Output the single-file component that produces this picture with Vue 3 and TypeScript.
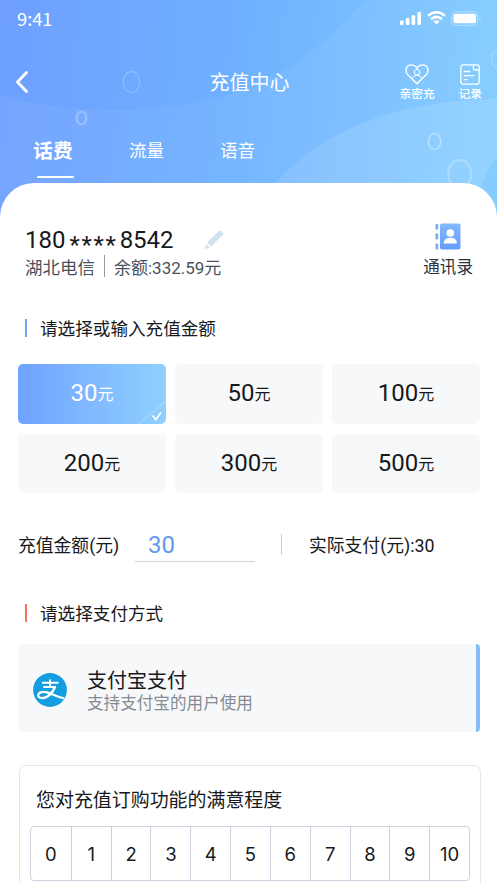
<script setup lang="ts">
import { ref } from 'vue'

const tabs: string[] = ['话费', '流量', '语音']
const activeTab = ref<number>(0)

const amounts: number[] = [30, 50, 100, 200, 300, 500]
const selected = ref<number>(30)

const scores: number[] = Array.from({ length: 11 }, (_, i) => i)
</script>

<template>
  <div class="page">
    <header class="hero">
      <svg class="decor" viewBox="0 0 497 225" width="497" height="225" aria-hidden="true">
        <path d="M0 94 Q50 110 115 110 Q250 110 325 40 Q352 13 366 0 L497 0 L497 225 L0 225Z" fill="#fff" fill-opacity=".055" />
        <path d="M275 183 C325 128 400 100 497 99 V225 H275Z" fill="#fff" fill-opacity=".11" />
        <path d="M497 157 Q486 171 480 190 L497 220Z" fill="#62bfff" fill-opacity=".3" />
        <g fill="none" stroke="#fff">
          <ellipse cx="131.5" cy="82" rx="8.2" ry="10.5" stroke-opacity=".22" stroke-width="1.3" />
          <ellipse cx="81.5" cy="118" rx="4.8" ry="6.3" stroke-opacity=".24" stroke-width="2.6" />
          <ellipse cx="434.5" cy="141.5" rx="6.2" ry="8" stroke-opacity=".4" stroke-width="1.5" />
          <ellipse cx="459.7" cy="174" rx="11.5" ry="14" stroke-opacity=".24" stroke-width="2.4" />
          <ellipse cx="498" cy="59" rx="6.5" ry="9" stroke-opacity=".23" stroke-width="1.3" />
        </g>
      </svg>

      <div class="status">
        <span class="time">9:41</span>
        <div class="status-icons">
          <svg width="22" height="14" viewBox="0 0 22 14" fill="#fff">
            <rect x="0" y="8.5" width="3.6" height="4.5" rx="1" />
            <rect x="5.8" y="6" width="3.6" height="7" rx="1" />
            <rect x="11.6" y="3.2" width="3.6" height="9.8" rx="1" />
            <rect x="17.4" y="0" width="3.6" height="13" rx="1" />
          </svg>
          <svg width="19" height="14" viewBox="0 0 19 14" fill="none" stroke="#fff" stroke-width="2.5">
            <path d="M1 4.7 Q9.5-2.3 18 4.7" />
            <path d="M4 8.2 Q9.5 3.6 15 8.2" />
            <path d="M6.4 10.4 Q9.5 8 12.6 10.4 L9.5 13.4Z" fill="#fff" stroke="none" />
          </svg>
          <svg width="31" height="15" viewBox="0 0 31 15">
            <rect x=".7" y=".7" width="26" height="13.6" rx="3.8" fill="none" stroke="#fff" stroke-opacity=".4" />
            <rect x="2.5" y="2.7" width="22.5" height="9.6" rx="1.8" fill="#fff" />
            <path d="M28.5 5.5 Q31 7.5 28.5 9.5Z" fill="#fff" fill-opacity=".45" />
          </svg>
        </div>
      </div>

      <nav class="navbar">
        <svg class="back" width="14" height="24" viewBox="0 0 14 24" fill="none" stroke="#fff" stroke-width="2.8" stroke-linecap="round" stroke-linejoin="round">
          <path d="M11.5 2.5 L2.5 12 L11.5 21.5" />
        </svg>
        <h1>充值中心</h1>
        <div class="actions">
          <div class="action">
            <svg width="24" height="21" viewBox="0 0 24 21" fill="none" stroke="#fff" stroke-width="1.4" stroke-linecap="round" stroke-linejoin="round">
              <path d="M12 19.8 L2.9 10.8 C-.8 6.8 1.4 .9 6.2 .9 C9 .9 11 2.4 12 4.2 C13 2.4 15 .9 17.8 .9 C22.6 .9 24.8 6.8 21.1 10.8Z" />
              <circle cx="12" cy="8.2" r="2.8" stroke-width="1" />
              <path d="M7.6 14.2 Q8.2 11.2 12 11.2 Q15.8 11.2 16.4 14.2" stroke-width="1" />
            </svg>
            <span>亲密充</span>
          </div>
          <div class="action">
            <svg width="20" height="21" viewBox="0 0 20 21" fill="none" stroke="#fff" stroke-width="1.3" stroke-linecap="round" stroke-linejoin="round">
              <path d="M14 .8 H3.5 Q.8 .8 .8 3.5 V17.5 Q.8 20.2 3.5 20.2 H16.5 Q19.2 20.2 19.2 17.5 V3 Q19.2 .8 17 .8Z M13.5 .8 V4.5 Q13.5 6 15 6 H19.2" />
              <path d="M4.2 7.5 H9.8 M4.2 11.7 H14 M4.2 15.7 H7" />
            </svg>
            <span>记录</span>
          </div>
        </div>
      </nav>

      <div class="tabs">
        <button v-for="(tab, i) in tabs" :key="tab" type="button" class="tab" :class="{ active: activeTab === i }" @click="activeTab = i">{{ tab }}</button>
      </div>
    </header>

    <main class="sheet">
      <section class="account">
        <div>
          <div class="phone">
            <span>180</span><span class="stars">****</span><span>8542</span>
            <svg width="20" height="20" viewBox="0 0 20 20" fill="#d1e2ec">
              <path d="M1 19 L2.2 13.8 L6 17.5Z M3.2 12.5 L13 2.7 L17 6.6 L7.2 16.4Z M13 2.7 L15.3 .7 Q16 .1 16.7 .7 L19.2 3.2 Q19.8 3.9 19.2 4.5 L17 6.6Z" />
            </svg>
          </div>
          <div class="carrier"><span>湖北电信</span><i></i><span class="balance">余额:332.59元</span></div>
        </div>
        <div class="contacts">
          <svg width="26" height="27" viewBox="0 0 26 27">
            <defs><linearGradient id="book" x1="0" y1="0" x2="0" y2="1"><stop stop-color="#83b9fc" /><stop offset="1" stop-color="#659dfb" /></linearGradient></defs>
            <rect x="5" y=".5" width="20.5" height="26" rx="2" fill="url(#book)" />
            <g fill="#76aafa"><rect x=".5" y="1" width="2.7" height="5.5" rx=".7" /><rect x=".5" y="10.5" width="2.7" height="6" rx=".7" /><rect x=".5" y="20.5" width="2.7" height="6" rx=".7" /></g>
            <circle cx="15.3" cy="10" r="3.8" fill="#fff" />
            <path d="M8.7 20.5 Q8.7 14.7 15.3 14.7 Q21.9 14.7 21.9 20.5Z" fill="#fff" />
          </svg>
          <span>通讯录</span>
        </div>
      </section>

      <h2 class="section-title blue">请选择或输入充值金额</h2>

      <div class="amounts">
        <button v-for="a in amounts" :key="a" type="button" class="amount" :class="{ selected: selected === a }" @click="selected = a">
          <span class="num">{{ a }}</span><span class="unit">元</span>
          <svg v-if="selected === a" class="corner" width="28" height="24" viewBox="0 0 28 24" fill="none" stroke="#fff">
            <path d="M1 24 L28 1" stroke-opacity=".35" stroke-width=".9" />
            <path d="M14.5 15.5 L17.8 19.5 L23 12.5" stroke-width="1.7" />
          </svg>
        </button>
      </div>

      <div class="summary">
        <span class="label">充值金额(元)</span>
        <span class="field">{{ selected }}</span>
        <i></i>
        <span class="actual">实际支付(元):{{ selected }}</span>
      </div>

      <h2 class="section-title red">请选择支付方式</h2>

      <div class="method">
        <svg width="34" height="34" viewBox="0 0 34 34">
          <defs><clipPath id="disc"><circle cx="17" cy="17" r="16.9" /></clipPath></defs>
          <circle cx="17" cy="17" r="16.9" fill="#129ee0" />
          <g clip-path="url(#disc)" fill="none" stroke="#fff">
            <path d="M17 6.5 V14 M9 9.7 H25.5 M10.3 14 H23" stroke-width="2" />
            <path d="M22.3 13.5 C20 19 15 25.2 9.3 25.2 C6 25.2 4.8 23.4 5.3 21.5 C6 18.8 10.5 18.3 14 19.3 C19 20.8 23 23.5 31.5 25.5" stroke-width="2.3" />
          </g>
        </svg>
        <div class="method-text">
          <strong>支付宝支付</strong>
          <span>支持支付宝的用户使用</span>
        </div>
      </div>

      <section class="survey">
        <h3>您对充值订购功能的满意程度</h3>
        <div class="scale">
          <span v-for="s in scores" :key="s">{{ s }}</span>
        </div>
      </section>
    </main>
  </div>
</template>

<style>
body {
  overflow: hidden;
}
</style>

<style scoped>
.page {
  width: 497px;
  height: 883px;
  overflow: hidden;
  background: #fff;
  color: #17191c;
  font-family: Roboto, "Noto Sans CJK SC", sans-serif;
}
h1, h2, h3 {
  margin: 0;
  font-weight: 400;
}
button {
  padding: 0;
  border: 0;
  background: none;
  color: inherit;
  font: inherit;
}
svg {
  display: block;
  flex: none;
}
.hero {
  position: relative;
  height: 225px;
  color: #fff;
  background: linear-gradient(94deg, #6e9fff 0%, #6eb0ff 45%, #80ccff 100%);
}
.decor {
  position: absolute;
  inset: 0;
}
.status {
  position: relative;
  display: flex;
  justify-content: space-between;
  height: 38px;
  padding: 0 15px 0 17px;
}
.time {
  font: 400 18.3px/36px "Noto Sans CJK SC", sans-serif;
}
.status-icons {
  display: flex;
  align-items: flex-start;
  gap: 5px;
  padding-top: 11px;
}
.status-icons svg:first-child {
  margin-top: 1px;
}
.navbar {
  position: relative;
  display: grid;
  grid-template-columns: 1fr auto 1fr;
  align-items: start;
  height: 88px;
  padding: 0 15px 0 17px;
}
.back {
  margin: 32px 0 0 -2px;
}
h1 {
  margin-top: 30px;
  font-size: 20px;
  line-height: 30px;
}
.actions {
  display: flex;
  justify-content: flex-end;
  gap: 24px;
  padding-top: 26px;
}
.action {
  display: flex;
  flex-direction: column;
  align-items: center;
  font-size: 11.7px;
  font-weight: 500;
  line-height: 16px;
}
.action span {
  margin-top: 1px;
}
.tabs {
  position: relative;
  display: flex;
  align-items: flex-start;
  padding: 10px 0 0 33px;
}
.tab {
  width: 35px;
  margin-right: 56px;
  font-size: 17.6px;
  line-height: 31px;
  white-space: nowrap;
}
.tab.active {
  position: relative;
  width: 40px;
  font-size: 19.7px;
  font-weight: 700;
}
.tab.active::after {
  content: "";
  position: absolute;
  left: 4px;
  top: 40px;
  width: 37px;
  height: 2px;
  border-radius: 1px;
  background: #fff;
}
.sheet {
  position: relative;
  height: 700px;
  margin-top: -42px;
  padding: 42px 17px 0 18px;
  box-sizing: border-box;
  border-radius: 34px 34px 0 0;
  background: #fff;
}
.account {
  display: flex;
  justify-content: space-between;
  height: 84px;
  padding: 0 7px;
}
.phone {
  display: flex;
  align-items: center;
  height: 30px;
  font-size: 24px;
  line-height: 30px;
}
.stars {
  margin: 10px 2px 0 4px;
  letter-spacing: 1.7px;
}
.phone svg {
  margin: -1px 0 0 30px;
}
.carrier {
  display: flex;
  align-items: center;
  height: 22px;
  color: #49515c;
  font-size: 17.5px;
}
.carrier i {
  width: 1px;
  height: 22px;
  margin: 0 9px;
  background: #939aa2;
}
.balance {
  font-size: 17px;
}
.contacts {
  display: flex;
  flex-direction: column;
  align-items: center;
  color: #30343a;
  font-size: 16.6px;
  line-height: 24px;
}
.contacts svg {
  margin: -2px 0 6px;
}
.section-title {
  display: flex;
  align-items: center;
  gap: 13px;
  height: 36px;
  padding-left: 7px;
  font-size: 17.6px;
}
.section-title::before {
  content: "";
  width: 2px;
  height: 18px;
  margin-top: 1px;
  background: #76a5f5;
}
.section-title.red::before {
  background: #ee7558;
}
.amounts {
  display: grid;
  grid-template-columns: repeat(3, 148px);
  grid-auto-rows: 59.5px;
  gap: 10px 9px;
  margin-top: 19px;
}
.amount {
  position: relative;
  display: flex;
  align-items: center;
  justify-content: center;
  padding-bottom: 1px;
  border-radius: 5px;
  background: #f7f8fa;
}
.amount.selected {
  color: #fff;
  background: linear-gradient(90deg, #70a2ff, #90d0ff);
}
.num {
  font-size: 24px;
}
.unit {
  font-size: 16px;
}
.corner {
  position: absolute;
  right: 0;
  bottom: 0;
}
.summary {
  display: flex;
  align-items: center;
  height: 36px;
  margin-top: 33px;
  font-size: 17.8px;
}
.label {
  width: 117px;
  white-space: nowrap;
}
.field {
  width: 107px;
  height: 34px;
  padding-left: 13px;
  border-bottom: 1px solid #cfd2dc;
  color: #6398ee;
  font-size: 24px;
  line-height: 36px;
}
.summary i {
  width: 1px;
  height: 21px;
  margin: 0 27px 0 26px;
  background: #c9cfd8;
}
.section-title.red {
  margin-top: 32px;
}
.method {
  display: flex;
  align-items: center;
  height: 88px;
  margin-top: 14px;
  padding-left: 15px;
  padding-top: 4px;
  box-sizing: border-box;
  border-right: 4px solid #83bdfa;
  border-radius: 4px;
  background: #f7f8fa;
}
.method-text {
  display: flex;
  flex-direction: column;
  margin: 3px 0 0 20px;
}
.method-text strong {
  font-size: 20px;
  font-weight: 400;
  line-height: 24px;
}
.method-text span {
  color: #858b94;
  font-size: 16.6px;
  line-height: 22px;
}
.survey {
  height: 160px;
  margin: 33px -1px 0 1px;
  padding: 20px 10px 0;
  box-sizing: border-box;
  border: 1px solid #e5e6e9;
  border-radius: 7px;
}
h3 {
  padding-left: 6px;
  font-size: 18.95px;
  line-height: 30px;
}
.scale {
  display: grid;
  grid-template-columns: repeat(11, 1fr);
  height: 55px;
  margin-top: 10px;
  box-sizing: border-box;
  border: 1px solid #ced1e0;
  border-radius: 4px;
  font: 400 18.5px/54px Inter, sans-serif;
  text-align: center;
}
.scale span + span {
  border-left: 1px solid #ced1e0;
}
</style>
